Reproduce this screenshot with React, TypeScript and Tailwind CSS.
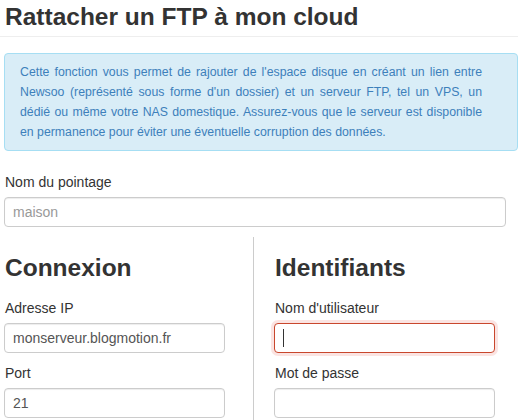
import React from 'react';

const font = { fontFamily: '"Liberation Sans", Arial, sans-serif' };

function Field({ label, value, placeholder, focused }: { label: string; value?: string; placeholder?: string; focused?: boolean }) {
  return (
    <div className="mb-[10px]">
      <label className="block text-[14px] leading-[20px] text-[#333] mb-[5px] pl-[1px]">{label}</label>
      <div className="relative">
        <input
          type="text"
          readOnly
          defaultValue={value}
          placeholder={placeholder}
          className={
            'block w-[221px] h-[30px] px-[8px] text-[14px] text-[#555] placeholder-[#999] bg-white rounded-[4px] outline-none border ' +
            (focused
              ? 'border-[#c9472d] shadow-[0_0_0_3px_rgba(231,76,60,0.15)]'
              : 'border-[#ccc] shadow-[inset_0_1px_1px_rgba(0,0,0,0.075)]')
          }
        />
        {focused && <span className="absolute left-[9px] top-[6px] w-px h-[18px] bg-[#333]" />}
      </div>
    </div>
  );
}

export default function App() {
  return (
    <div className="w-[518px] h-[420px] overflow-hidden bg-white" style={font}>
      <div className="border-b border-[#eee] pt-[2px] pb-[5px] px-[5px]">
        <h1 className="text-[24.5px] leading-[29px] font-bold text-[#333]">Rattacher un FTP à mon cloud</h1>
      </div>

      <div className="px-[4px]">
        <div className="mt-[16px] w-[514px] border border-[#a6def3] bg-[#d9edf7] rounded-[4px] pl-[15px] pr-[35px] py-[8px]">
          <p className="text-[12.3px] leading-[20px] text-[#3d80bb] text-justify w-[462px]">
            Cette fonction vous permet de rajouter de l'espace disque en créant un lien entre Newsoo (représenté sous forme d'un dossier) et un serveur FTP, tel un VPS, un dédié ou même votre NAS domestique. Assurez-vous que le serveur est disponible en permanence pour éviter une éventuelle corruption des données.
          </p>
        </div>

        <div className="mt-[21px]">
          <label className="block text-[14px] leading-[20px] text-[#333] mb-[5px] pl-[1px]">Nom du pointage</label>
          <input
            type="text"
            readOnly
            placeholder="maison"
            className="block w-[502px] h-[30px] px-[8px] text-[14px] text-[#555] placeholder-[#999] bg-white border border-[#ccc] rounded-[4px] outline-none shadow-[inset_0_1px_1px_rgba(0,0,0,0.075)]"
          />
        </div>
      </div>

      <div className="flex mt-[10px]">
        <div className="w-[254px] pl-[4px] border-r border-[#ccc]">
          <h2 className="text-[24.5px] leading-[29px] font-bold text-[#333] pt-[16px] pb-[16px] pl-[1px]">Connexion</h2>
          <Field label="Adresse IP" value="monserveur.blogmotion.fr" />
          <Field label="Port" value="21" />
        </div>
        <div className="flex-1 pl-[20px]">
          <h2 className="text-[24.5px] leading-[29px] font-bold text-[#333] pt-[16px] pb-[16px] pl-[1px]">Identifiants</h2>
          <Field label="Nom d'utilisateur" focused />
          <Field label="Mot de passe" />
        </div>
      </div>
    </div>
  );
}
